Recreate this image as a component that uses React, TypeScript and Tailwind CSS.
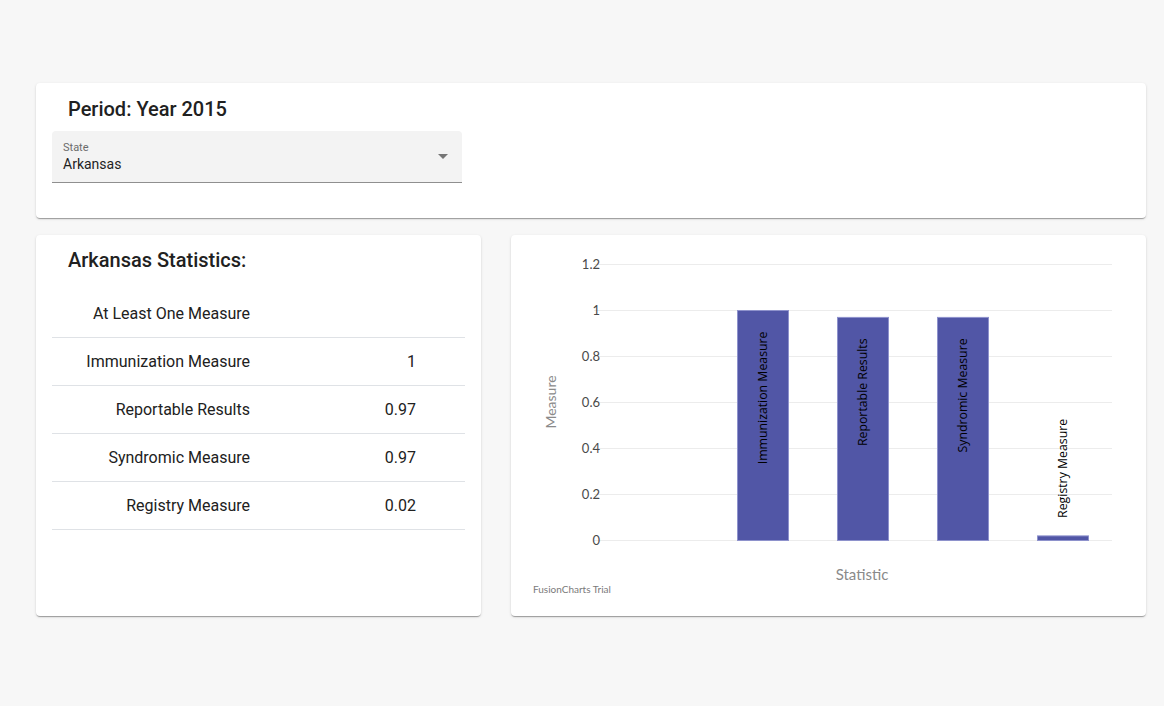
// stats for the selected state
const rows = [
  { label: "At Least One Measure", value: "" },
  { label: "Immunization Measure", value: "1" },
  { label: "Reportable Results", value: "0.97" },
  { label: "Syndromic Measure", value: "0.97" },
  { label: "Registry Measure", value: "0.02" },
];

const bars = [
  { label: "Immunization Measure", value: 1 },
  { label: "Reportable Results", value: 0.97 },
  { label: "Syndromic Measure", value: 0.97 },
  { label: "Registry Measure", value: 0.02 },
];

const card =
  "rounded bg-white shadow-[0_2px_1px_-1px_rgba(0,0,0,0.2),0_1px_1px_0_rgba(0,0,0,0.14),0_1px_3px_0_rgba(0,0,0,0.12)]";

function StateSelect() {
  return (
    <div className="relative h-[52px] w-[410px] rounded-t bg-[#f3f3f3] border-b border-[#8f8f8f]">
      <div className="absolute left-[11px] top-[10px] text-[11px] leading-[13px] text-[#6b6b6b]">
        State
      </div>
      <div className="absolute left-[11px] top-[24px] text-[14px] leading-[18px] text-[#1f1f1f]">
        Arkansas
      </div>
      <svg
        className="absolute right-[7px] top-[13px]"
        width="24"
        height="24"
        viewBox="0 0 24 24"
      >
        <path d="M7 10l5 5 5-5z" fill="#757575" />
      </svg>
    </div>
  );
}

function StatsTable() {
  return (
    <div className="mx-4 mt-[16px]">
      {rows.map((r) => (
        <div
          key={r.label}
          className="flex h-[48px] items-center border-b border-[#dfe2e6] text-[16px] text-[#212121]"
        >
          <div className="w-[214px] pr-4 text-right">{r.label}</div>
          <div className="w-[166px] pr-4 text-right">{r.value}</div>
        </div>
      ))}
    </div>
  );
}

function Chart() {
  const ticks = [1.2, 1, 0.8, 0.6, 0.4, 0.2, 0];
  const y0 = 305.5;
  const scale = 230; // px per unit (46px per 0.2)
  return (
    <svg width="635" height="381" className="block">
      {ticks.map((t) => {
        const y = y0 - t * scale;
        return (
          <g key={t}>
            <line x1="83" x2="601" y1={y} y2={y} stroke="#ececec" strokeWidth="1" />
            <text
              x="89"
              y={y}
              dy="0.35em"
              textAnchor="end"
              fontFamily="Lato, sans-serif"
              fontSize="13"
              fill="#4a4a4a"
            >
              {t}
            </text>
          </g>
        );
      })}
      {bars.map((b, i) => {
        const x = 226.5 + i * 100;
        const top = y0 - b.value * scale;
        const cx = x + 25.5;
        const inside = b.value > 0.3;
        return (
          <g key={b.label}>
            <rect
              x={x}
              y={top}
              width="51"
              height={y0 - top}
              fill="#5156a6"
              stroke="#8e92cc"
              strokeWidth="1"
            />
            <text
              transform={`translate(${cx} ${inside ? top + 21 : top - 18}) rotate(-90)`}
              dy="0.35em"
              textAnchor={inside ? "end" : "start"}
              fontFamily="'Open Sans', sans-serif"
              fontSize="12.3"
              fill="#000"
            >
              {b.label}
            </text>
          </g>
        );
      })}
      <text
        transform="translate(40 167) rotate(-90)"
        dy="0.35em"
        textAnchor="middle"
        fontFamily="Lato, sans-serif"
        fontSize="14"
        fill="#8a8a8a"
      >
        Measure
      </text>
      <text
        x="351"
        y="340"
        dy="0.35em"
        textAnchor="middle"
        fontFamily="Lato, sans-serif"
        fontSize="15"
        fill="#8a8a8a"
      >
        Statistic
      </text>
      <text
        x="22"
        y="354"
        dy="0.35em"
        fontFamily="Lato, sans-serif"
        fontSize="10"
        fill="#7a7a7a"
      >
        FusionCharts Trial
      </text>
    </svg>
  );
}

export default function App() {
  return (
    <div
      className="min-h-[706px] bg-[#f7f7f7] pl-[36px] pr-[18px] pt-[83px]"
      style={{ fontFamily: "Roboto, 'Liberation Sans', sans-serif" }}
    >
      <div className={`${card} h-[135px] px-4 pt-[12px]`}>
        <h2 className="ml-4 h-[28px] text-[20px] font-medium leading-[28px] text-[#212121]">
          Period: Year 2015
        </h2>
        <div className="mt-[8px]">
          <StateSelect />
        </div>
      </div>

      <div className="mt-[17px] flex gap-[30px]">
        <div className={`${card} h-[381px] w-[445px] pt-[11px]`}>
          <h2 className="ml-8 h-[28px] text-[20px] font-medium leading-[28px] text-[#212121]">
            Arkansas Statistics:
          </h2>
          <StatsTable />
        </div>
        <div className={`${card} h-[381px] w-[635px]`}>
          <Chart />
        </div>
      </div>
    </div>
  );
}
